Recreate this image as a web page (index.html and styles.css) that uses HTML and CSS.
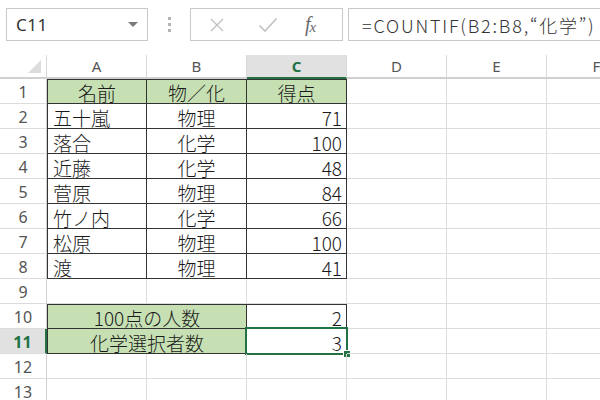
FILE: index.html
```html
<!DOCTYPE html>
<html lang="ja">
<head>
<meta charset="utf-8">
<link rel="stylesheet" href="styles.css">
</head>
<body>
<div class="app">
  <div class="fbar">
    <div class="namebox"><span class="ref">C11</span><span class="caret"></span></div>
    <div class="dots"><i></i><i></i><i></i></div>
    <div class="btns">
      <svg class="ico-x" width="16" height="16" viewBox="0 0 16 16"><path d="M2 2 L14 14 M14 2 L2 14" stroke="#c2c2c2" stroke-width="1.4" fill="none"/></svg>
      <svg class="ico-ok" width="20" height="16" viewBox="0 0 20 16"><path d="M1.5 8.5 L7 14 L18.5 1.5" stroke="#c2c2c2" stroke-width="1.6" fill="none"/></svg>
      <span class="fx"><i>f</i><i class="sub">x</i></span>
    </div>
    <div class="formula">=COUNTIF(B2:B8,“化学”)</div>
  </div>

  <div class="sheet">
    <div class="corner"><span class="tri"></span></div>
    <div class="ch">A</div>
    <div class="ch">B</div>
    <div class="ch sel">C</div>
    <div class="ch">D</div>
    <div class="ch">E</div>
    <div class="ch">F</div>

    <div class="rh">1</div>
    <div class="c t l tp g ctr">名前</div>
    <div class="c t tp g ctr">物／化</div>
    <div class="c t tp g ctr">得点</div>
    <div class="c"></div><div class="c"></div><div class="c"></div>

    <div class="rh">2</div>
    <div class="c t l">五十嵐</div>
    <div class="c t ctr">物理</div>
    <div class="c t num">71</div>
    <div class="c"></div><div class="c"></div><div class="c"></div>

    <div class="rh">3</div>
    <div class="c t l">落合</div>
    <div class="c t ctr">化学</div>
    <div class="c t num">100</div>
    <div class="c"></div><div class="c"></div><div class="c"></div>

    <div class="rh">4</div>
    <div class="c t l">近藤</div>
    <div class="c t ctr">化学</div>
    <div class="c t num">48</div>
    <div class="c"></div><div class="c"></div><div class="c"></div>

    <div class="rh">5</div>
    <div class="c t l">菅原</div>
    <div class="c t ctr">物理</div>
    <div class="c t num">84</div>
    <div class="c"></div><div class="c"></div><div class="c"></div>

    <div class="rh">6</div>
    <div class="c t l">竹ノ内</div>
    <div class="c t ctr">化学</div>
    <div class="c t num">66</div>
    <div class="c"></div><div class="c"></div><div class="c"></div>

    <div class="rh">7</div>
    <div class="c t l">松原</div>
    <div class="c t ctr">物理</div>
    <div class="c t num">100</div>
    <div class="c"></div><div class="c"></div><div class="c"></div>

    <div class="rh">8</div>
    <div class="c t l">渡</div>
    <div class="c t ctr">物理</div>
    <div class="c t num">41</div>
    <div class="c"></div><div class="c"></div><div class="c"></div>

    <div class="rh">9</div>
    <div class="c"></div><div class="c"></div><div class="c"></div>
    <div class="c"></div><div class="c"></div><div class="c"></div>

    <div class="rh">10</div>
    <div class="c t l tp g ctr span2">100点の人数</div>
    <div class="c t tp num">2</div>
    <div class="c"></div><div class="c"></div><div class="c"></div>

    <div class="rh sel">11</div>
    <div class="c t l g ctr span2">化学選択者数</div>
    <div class="c t num active">3<span class="selbox"><span class="handle"></span></span></div>
    <div class="c"></div><div class="c"></div><div class="c"></div>

    <div class="rh">12</div>
    <div class="c"></div><div class="c"></div><div class="c"></div>
    <div class="c"></div><div class="c"></div><div class="c"></div>

    <div class="rh">13</div>
    <div class="c"></div><div class="c"></div><div class="c"></div>
    <div class="c"></div><div class="c"></div><div class="c"></div>
  </div>
</div>
</body>
</html>
```

FILE: styles.css
```css
html, body {
  margin: 0;
  padding: 0;
  background: #ffffff;
}
body {
  width: 600px;
  height: 400px;
  overflow: hidden;
}
.app {
  width: 600px;
  height: 400px;
  overflow: hidden;
  font-family: "Noto Sans CJK JP", "Noto Sans", sans-serif;
  color: #222;
}

/* formula bar */
.fbar {
  display: flex;
  align-items: stretch;
  height: 33px;
  padding: 8px 0 0 6px;
  white-space: nowrap;
}
.namebox {
  box-sizing: border-box;
  width: 142px;
  border: 1px solid #c8c8c8;
  display: flex;
  align-items: center;
  justify-content: space-between;
  padding: 0 9px 0 9px;
}
.ref {
  font-family: "Noto Sans", sans-serif;
  font-size: 17px;
  color: #333;
  letter-spacing: 0.5px;
}
.caret {
  width: 0;
  height: 0;
  border-left: 5px solid transparent;
  border-right: 5px solid transparent;
  border-top: 5px solid #7a7a7a;
}
.dots {
  width: 42px;
  display: flex;
  flex-direction: column;
  align-items: center;
  justify-content: center;
  gap: 3px;
}
.dots i {
  display: block;
  width: 3px;
  height: 3px;
  background: #b4b4b4;
}
.btns {
  box-sizing: border-box;
  width: 153px;
  border: 1px solid #c8c8c8;
  display: flex;
  align-items: center;
  padding-left: 18px;
}
.ico-x { margin-right: 33px; }
.ico-ok { margin-right: 27px; }
.fx {
  font-family: "Liberation Serif", serif;
  color: #6a6a6a;
  font-size: 20px;
  font-style: italic;
}
.fx i { font-style: italic; }
.fx .sub { font-size: 15px; position: relative; top: 1px; margin-left: -1px; }
.formula {
  box-sizing: border-box;
  flex: 1;
  margin-left: 5px;
  border: 1px solid #c8c8c8;
  border-right: none;
  display: flex;
  align-items: center;
  padding-left: 13px;
  font-size: 18px;
  color: #333;
  font-weight: 300;
  letter-spacing: 1.8px;
}

/* sheet */
.sheet {
  margin-top: 14px;
  display: grid;
  grid-template-columns: 47px repeat(6, 100px);
  grid-template-rows: 24px;
  grid-auto-rows: 25px;
  width: 647px;
}
.corner, .ch, .rh, .c {
  box-sizing: border-box;
}
.corner {
  position: relative;
  border-right: 1px solid #d8d8d8;
  border-bottom: 2px solid #d0d0d0;
}
.tri {
  position: absolute;
  right: 5px;
  bottom: 4px;
  width: 0;
  height: 0;
  border-left: 13px solid transparent;
  border-bottom: 13px solid #dcdcdc;
}
.ch {
  border-right: 1px solid #d8d8d8;
  border-bottom: 2px solid #d0d0d0;
  display: flex;
  align-items: center;
  justify-content: center;
  font-family: "Noto Sans", sans-serif;
  font-size: 15px;
  color: #555;
}
.ch.sel {
  background: #e1e1e1;
  border-bottom: 2px solid #217346;
  color: #217346;
  font-weight: 700;
}
.rh {
  border-right: 1px solid #d0d0d0;
  border-bottom: 1px solid #dcdcdc;
  display: flex;
  align-items: center;
  justify-content: center;
  font-family: "Noto Sans", sans-serif;
  font-size: 16px;
  color: #555;
  padding-top: 2px;
}
.rh.sel {
  background: #e1e1e1;
  border-right: 2px solid #217346;
  color: #217346;
  font-weight: 700;
}
.c {
  position: relative;
  border-right: 1px solid #dcdcdc;
  border-bottom: 1px solid #dcdcdc;
  display: flex;
  align-items: center;
  padding: 2px 4px 0 5px;
  font-size: 19px;
  font-weight: 300;
  color: #1a1a1a;
  white-space: nowrap;
}
.c.t {
  border-right-color: #333333;
  border-bottom-color: #333333;
}
.c.l { border-left: 1px solid #333333; }
.c.tp { border-top: 1px solid #333333; }
.c.g { background: #c6e0b4; }
.c.ctr { justify-content: center; padding-left: 0; padding-right: 0; }
.c.num { justify-content: flex-end; }
.span2 { grid-column: span 2; }

.selbox {
  position: absolute;
  left: -2px;
  top: -2px;
  right: -2px;
  bottom: -2px;
  border: 2px solid #217346;
  pointer-events: none;
}
.handle {
  position: absolute;
  right: -5px;
  bottom: -5px;
  width: 6px;
  height: 6px;
  background: #217346;
  border: 1px solid #ffffff;
}
```
